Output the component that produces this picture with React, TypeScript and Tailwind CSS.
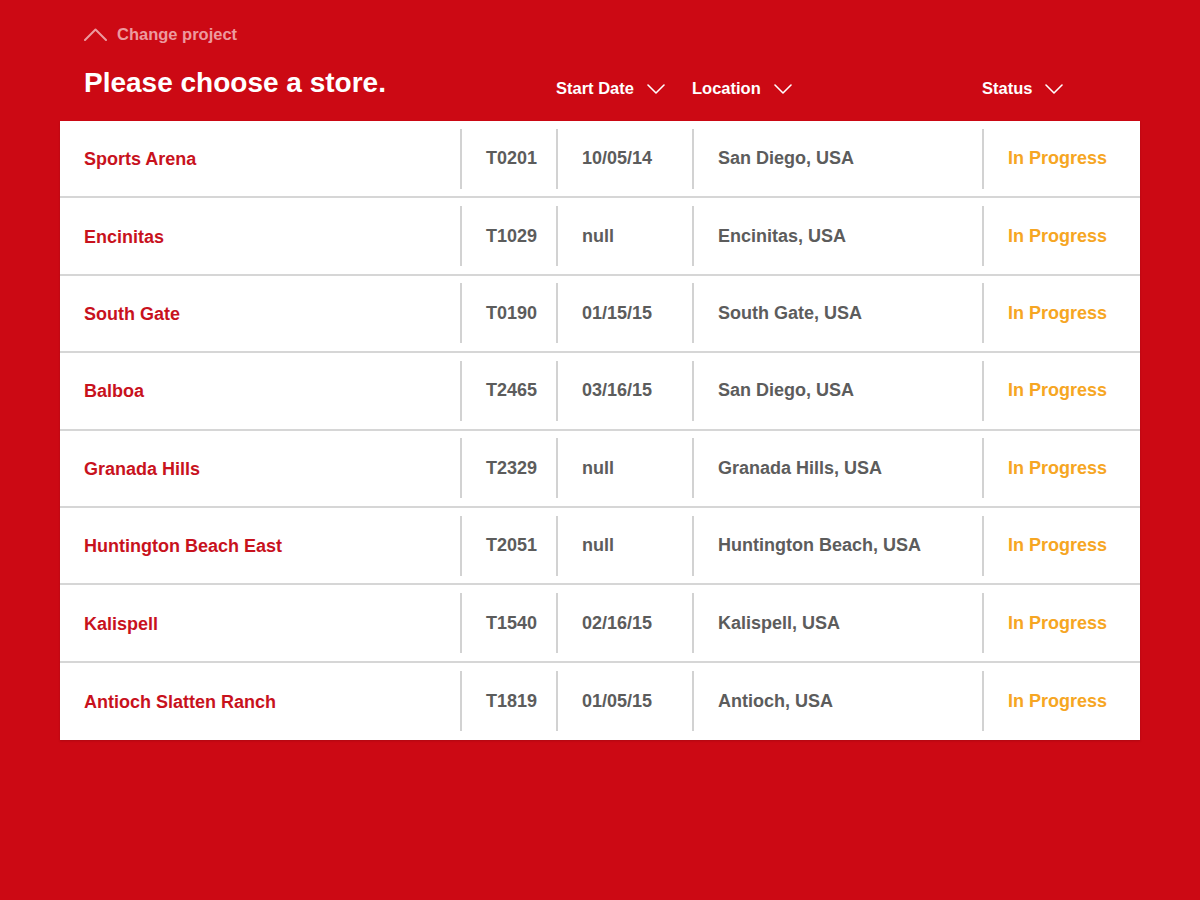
const stores = [
  { name: "Sports Arena", code: "T0201", date: "10/05/14", location: "San Diego, USA" },
  { name: "Encinitas", code: "T1029", date: "null", location: "Encinitas, USA" },
  { name: "South Gate", code: "T0190", date: "01/15/15", location: "South Gate, USA" },
  { name: "Balboa", code: "T2465", date: "03/16/15", location: "San Diego, USA" },
  { name: "Granada Hills", code: "T2329", date: "null", location: "Granada Hills, USA" },
  { name: "Huntington Beach East", code: "T2051", date: "null", location: "Huntington Beach, USA" },
  { name: "Kalispell", code: "T1540", date: "02/16/15", location: "Kalispell, USA" },
  { name: "Antioch Slatten Ranch", code: "T1819", date: "01/05/15", location: "Antioch, USA" },
];

const ChevronDown = () => (
  <svg width="18" height="10" viewBox="0 0 18 10" fill="none">
    <path d="M1 1l8 8 8-8" stroke="#fff" strokeWidth="1.6" strokeLinecap="round" strokeLinejoin="round" />
  </svg>
);

const ChevronUp = () => (
  <svg width="23" height="13" viewBox="0 0 23 13" fill="none">
    <path d="M1 12L11.5 1.5 22 12" stroke="#ec9a9f" strokeWidth="2" strokeLinecap="round" strokeLinejoin="round" />
  </svg>
);

const cols = "grid grid-cols-[401px_96px_136px_290px_157px]";

export default function App() {
  return (
    <div className="min-h-[900px] bg-[#cc0914] px-[60px] pt-[24px] font-['Liberation_Sans',Arial,sans-serif]">
      {/* Back link */}
      <div className="flex h-5 items-center pl-6">
        <ChevronUp />
        <span className="ml-[10px] text-[16.5px] font-bold text-[#ec9a9f]">Change project</span>
      </div>

      {/* Title + sort headers */}
      <div className={`${cols} h-[77px] items-center`}>
        <h1 className="pl-6 text-[28px] font-bold leading-8 text-white">Please choose a store.</h1>
        <div />
        <button className="-ml-px flex items-center gap-[13px] pt-3 text-[16.5px] font-bold text-white">
          Start Date <ChevronDown />
        </button>
        <button className="-ml-px flex items-center gap-[13px] pt-3 text-[16.5px] font-bold text-white">
          Location <ChevronDown />
        </button>
        <button className="-ml-px flex items-center gap-[13px] pt-3 text-[16.5px] font-bold text-white">
          Status <ChevronDown />
        </button>
      </div>

      {/* Store list */}
      <div className="bg-white shadow-[0_1px_2px_rgba(0,0,0,0.15)]">
        {stores.map((s, i) => (
          <div
            key={s.code}
            className={`${cols} h-[77.4px] items-center text-[18px] font-bold ${i < stores.length - 1 ? "border-b-2 border-[#d6d6d6]" : ""}`}
          >
            <div className="pl-6 pt-[2px] text-[#c8121d]">{s.name}</div>
            <div className="-ml-px flex h-[60px] items-center border-l-2 border-[#d2d2d2] pl-6 text-[#5c5c5c]">{s.code}</div>
            <div className="-ml-px flex h-[60px] items-center border-l-2 border-[#d2d2d2] pl-6 text-[#5c5c5c]">{s.date}</div>
            <div className="-ml-px flex h-[60px] items-center border-l-2 border-[#d2d2d2] pl-6 text-[#5c5c5c]">{s.location}</div>
            <div className="-ml-px flex h-[60px] items-center border-l-2 border-[#d2d2d2] pl-6 text-[#f6a623]">In Progress</div>
          </div>
        ))}
      </div>
    </div>
  );
}
